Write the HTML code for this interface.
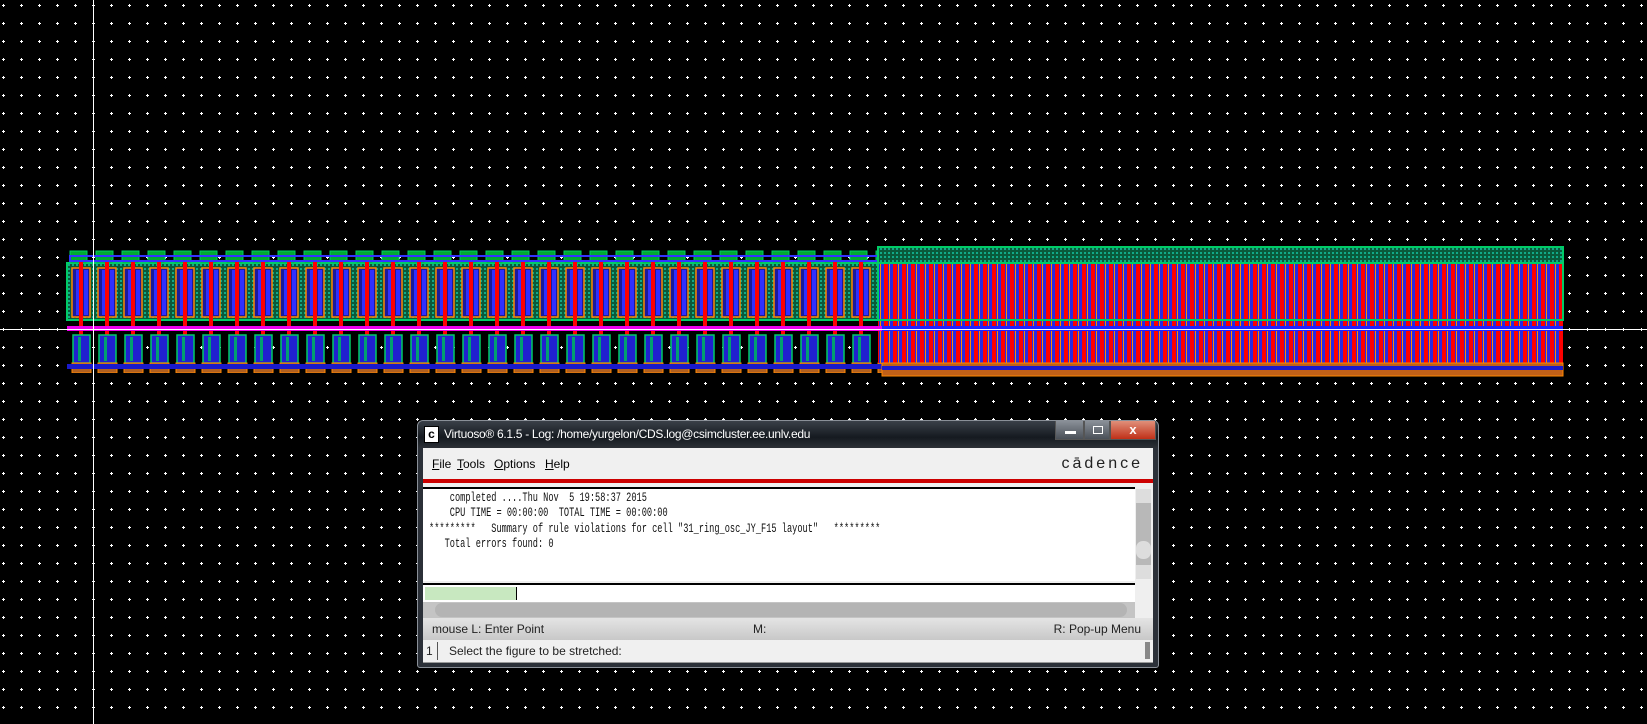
<!DOCTYPE html>
<html><head><meta charset="utf-8"><style>
html,body{margin:0;padding:0;background:#000;width:1647px;height:724px;overflow:hidden;font-family:"Liberation Sans",sans-serif}
svg{position:absolute;left:0;top:0}
.dlg{position:absolute;left:417px;top:420px;width:742px;height:248px;background:#2b3038;border:1px solid #8a9098;border-radius:6px 6px 3px 3px;box-sizing:border-box}
.title{position:absolute;left:0;top:0;width:100%;height:27px;background:linear-gradient(#3a4048,#151a20 60%,#2c3036);border-radius:6px 6px 0 0;color:#fff;font-size:12px}
.title span{position:absolute;left:26px;top:6px;letter-spacing:-0.3px}
.ic{position:absolute;left:6px;top:5px;width:13px;height:15px;background:#fff;border:1px solid #000;font:bold 12px "Liberation Sans";color:#000;text-align:center;line-height:15px}
.btn{position:absolute;top:0;height:19px;border:1px solid #555;border-top:none;box-sizing:border-box}
.inner{position:absolute;left:5px;top:27px;right:5px;bottom:5px;background:#efefef}
.menu{position:absolute;left:0;top:0;right:0;height:31px;background:#f0f0f0;font-size:12px;color:#000}
.menu span{position:absolute;top:9px}
.red{position:absolute;left:0;right:0;top:31px;height:4px;background:#cc0000}
.txt{position:absolute;left:0;top:39px;right:18px;height:92px;background:#fff;border-top:2px solid #000;overflow:hidden}
.mono{position:absolute;left:6px;top:1px;font-family:"Liberation Mono",monospace;font-size:13px;line-height:15.3px;white-space:pre;transform:scaleX(0.665);transform-origin:0 0;color:#111}
.vs{position:absolute;right:2px;top:41px;width:15px;height:90px;background:#b8b8b8}
.cmd{position:absolute;left:0;right:18px;top:135px;height:19px;background:#fff;border-top:2px solid #000}
.hs{position:absolute;left:0;right:18px;top:154px;height:16px;background:#c4c4c4}
.st{position:absolute;left:0;right:0;top:170px;height:22px;background:linear-gradient(#e4e4e4,#c8c8c8);font-size:12px;color:#222}
.pr{position:absolute;left:0;right:0;top:192px;height:22px;background:#f0f0f0;font-size:12px;color:#222;border-bottom:1px solid #999}
</style></head><body>
<svg width="1647" height="724" xmlns="http://www.w3.org/2000/svg">
<defs>
<pattern id="dots" x="0" y="0" width="18" height="18" patternUnits="userSpaceOnUse">
<rect x="2" y="5" width="3" height="1" fill="#fff"/><rect x="3" y="4" width="1" height="3" fill="#fff"/>
</pattern>
<pattern id="cellL" x="67" y="0" width="26" height="724" patternUnits="userSpaceOnUse">
<rect x="3" y="251" width="17" height="12" fill="#0a3" stroke="#0c6" stroke-width="1"/>
<rect x="5" y="268" width="18" height="49" fill="#1a1a9a" stroke="#f80" stroke-width="1.5"/>
<rect x="9" y="270" width="4" height="45" fill="#3030ff"/>
<rect x="17" y="270" width="4" height="45" fill="#3030ff"/>
<rect x="12" y="262" width="4" height="110" fill="#f00"/>
<rect x="6" y="335" width="17" height="28" fill="#2020d0" stroke="#0c6" stroke-width="1.5"/>
<rect x="11" y="337" width="3" height="24" fill="#00a070"/>
<rect x="5" y="363" width="19" height="10" fill="#b06020" stroke="#f80"/>
</pattern>
<pattern id="cellR" x="882" y="0" width="9" height="724" patternUnits="userSpaceOnUse">
<rect x="0" y="0" width="9" height="724" fill="#2a2ae0"/>
<rect x="2" y="0" width="4" height="724" fill="#f00"/>
<rect x="7" y="0" width="1" height="724" fill="#f80"/>
</pattern>
<pattern id="hatch" width="4" height="4" patternUnits="userSpaceOnUse">
<rect width="4" height="4" fill="#0a5a3a"/><rect width="2" height="2" fill="#1a8"/>
</pattern>
</defs>
<rect width="1647" height="724" fill="#000"/>
<rect width="1647" height="724" fill="url(#dots)"/>
<rect x="67" y="263" width="815" height="57" fill="url(#hatch)" stroke="#0c6" stroke-width="2"/>
<rect x="67" y="250" width="815" height="123" fill="url(#cellL)"/>
<rect x="70" y="256" width="810" height="5" fill="none" stroke="#33f" stroke-width="2"/>
<rect x="67" y="364" width="815" height="5" fill="#1a1acc"/>
<rect x="878" y="247" width="685" height="16" fill="url(#hatch)" stroke="#0c6" stroke-width="2"/>
<rect x="878" y="263" width="685" height="100" fill="url(#cellR)"/>
<rect x="878" y="263" width="685" height="57" fill="none" stroke="#0c6" stroke-width="2"/>
<rect x="882" y="363" width="681" height="13" fill="#c06018" stroke="#f80"/>
<rect x="882" y="366" width="681" height="4" fill="#1a1acc"/>
<rect x="67" y="326" width="1496" height="5" fill="#e0e"/>
<rect x="882" y="326" width="681" height="5" fill="#22f"/>
<rect x="0" y="329" width="1647" height="1" fill="#fff"/>
<rect x="93" y="0" width="1" height="724" fill="#fff"/>
</svg>
<div class="dlg">
 <div class="title"><div class="ic">c</div><span>Virtuoso® 6.1.5 - Log: /home/yurgelon/CDS.log@csimcluster.ee.unlv.edu</span>
  <div class="btn" style="left:637px;width:29px;background:linear-gradient(#8a9098,#4a5058)"><div style="position:absolute;left:9px;top:10px;width:11px;height:3px;background:#fff"></div></div>
  <div class="btn" style="left:666px;width:26px;background:linear-gradient(#8a9098,#4a5058)"><div style="position:absolute;left:8px;top:5px;width:8px;height:6px;border:1px solid #fff"></div></div>
  <div class="btn" style="left:692px;width:46px;background:linear-gradient(#e0907a,#c03018);color:#fff;font-weight:bold;text-align:center;font-size:13px;line-height:17px">x</div>
 </div>
 <div class="inner">
  <div class="menu"><span style="left:9px"><u>F</u>ile</span><span style="left:34px"><u>T</u>ools</span><span style="left:71px"><u>O</u>ptions</span><span style="left:122px"><u>H</u>elp</span>
   <span style="right:10px;top:7px;font-size:16px;letter-spacing:3px;color:#222">cādence</span></div>
  <div class="red"></div>
  <div class="txt"><div class="mono">    completed ....Thu Nov  5 19:58:37 2015
    CPU TIME = 00:00:00  TOTAL TIME = 00:00:00
*********   Summary of rule violations for cell "31_ring_osc_JY_F15 layout"   *********
   Total errors found: 0</div></div>
  <div class="vs"><div style="position:absolute;top:0;width:15px;height:14px;background:#ddd"></div><div style="position:absolute;top:52px;width:15px;height:18px;background:#ddd;border-radius:7px"></div><div style="position:absolute;bottom:0;width:15px;height:14px;background:#ddd"></div></div>
  <div class="cmd"><div style="position:absolute;left:2px;top:2px;width:91px;height:13px;background:#c8e8c0;border-right:1px solid #000"></div></div>
  <div class="hs"><div style="position:absolute;left:12px;right:8px;top:1px;height:14px;background:#b4b4b4;border-radius:7px"></div></div>
  <div class="st"><span style="position:absolute;left:9px;top:4px">mouse L: Enter Point</span><span style="position:absolute;left:330px;top:4px">M:</span><span style="position:absolute;right:12px;top:4px">R: Pop-up Menu</span></div>
  <div class="pr"><span style="position:absolute;left:3px;top:4px">1</span><div style="position:absolute;left:14px;top:2px;width:1px;height:18px;background:#555"></div><span style="position:absolute;left:26px;top:4px">Select the figure to be stretched:</span><div style="position:absolute;right:3px;top:2px;width:5px;height:17px;background:#888"></div></div>
 </div>
</div>
</body></html>
